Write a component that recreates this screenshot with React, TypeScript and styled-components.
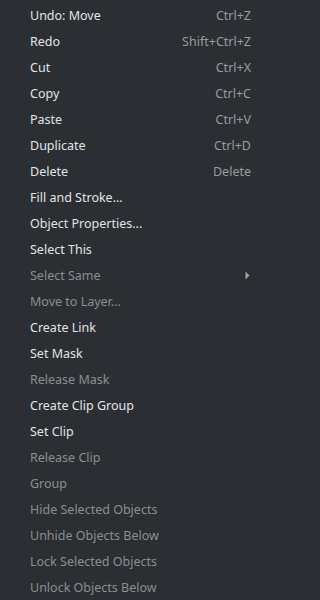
import React from 'react';
import styled, { createGlobalStyle } from 'styled-components';

type Item = { label: string; shortcut?: string; disabled?: boolean; submenu?: boolean };

const items: Item[] = [
  { label: 'Undo: Move', shortcut: 'Ctrl+Z' },
  { label: 'Redo', shortcut: 'Shift+Ctrl+Z' },
  { label: 'Cut', shortcut: 'Ctrl+X' },
  { label: 'Copy', shortcut: 'Ctrl+C' },
  { label: 'Paste', shortcut: 'Ctrl+V' },
  { label: 'Duplicate', shortcut: 'Ctrl+D' },
  { label: 'Delete', shortcut: 'Delete' },
  { label: 'Fill and Stroke...' },
  { label: 'Object Properties...' },
  { label: 'Select This' },
  { label: 'Select Same', disabled: true, submenu: true },
  { label: 'Move to Layer...', disabled: true },
  { label: 'Create Link' },
  { label: 'Set Mask' },
  { label: 'Release Mask', disabled: true },
  { label: 'Create Clip Group' },
  { label: 'Set Clip' },
  { label: 'Release Clip', disabled: true },
  { label: 'Group', disabled: true },
  { label: 'Hide Selected Objects', disabled: true },
  { label: 'Unhide Objects Below', disabled: true },
  { label: 'Lock Selected Objects', disabled: true },
  { label: 'Unlock Objects Below', disabled: true },
];

const GlobalStyle = createGlobalStyle`
  html, body {
    margin: 0;
    padding: 0;
    background: #2b2e32;
  }
`;

const Menu = styled.div`
  width: 260px;
  height: 600px;
  box-sizing: border-box;
  padding: 2px 0 0;
  background: #2b2e32;
  font-family: 'Noto Sans', 'Open Sans', sans-serif;
  font-size: 12.5px;
  overflow: hidden;
`;

const Row = styled.div<{ $disabled?: boolean }>`
  display: flex;
  align-items: center;
  height: 26px;
  padding: 0 9px 0 30px;
  color: ${({ $disabled }) => ($disabled ? '#8c8e91' : '#e3e4e5')};
`;

const Label = styled.span`
  flex: 1;
  white-space: nowrap;
`;

const Shortcut = styled.span`
  color: #9a9c9f;
  white-space: nowrap;
`;

const Arrow = styled.svg`
  width: 5px;
  height: 9px;
  margin-right: 1px;
`;

export default function App() {
  return (
    <>
      <GlobalStyle />
      <Menu>
        {items.map((it) => (
          <Row key={it.label} $disabled={it.disabled}>
            <Label>{it.label}</Label>
            {it.shortcut && <Shortcut>{it.shortcut}</Shortcut>}
            {it.submenu && (
              <Arrow viewBox="0 0 5 9">
                <path d="M0.5 0.5 L4.5 4.5 L0.5 8.5 Z" fill="#a0a2a5" />
              </Arrow>
            )}
          </Row>
        ))}
      </Menu>
    </>
  );
}
